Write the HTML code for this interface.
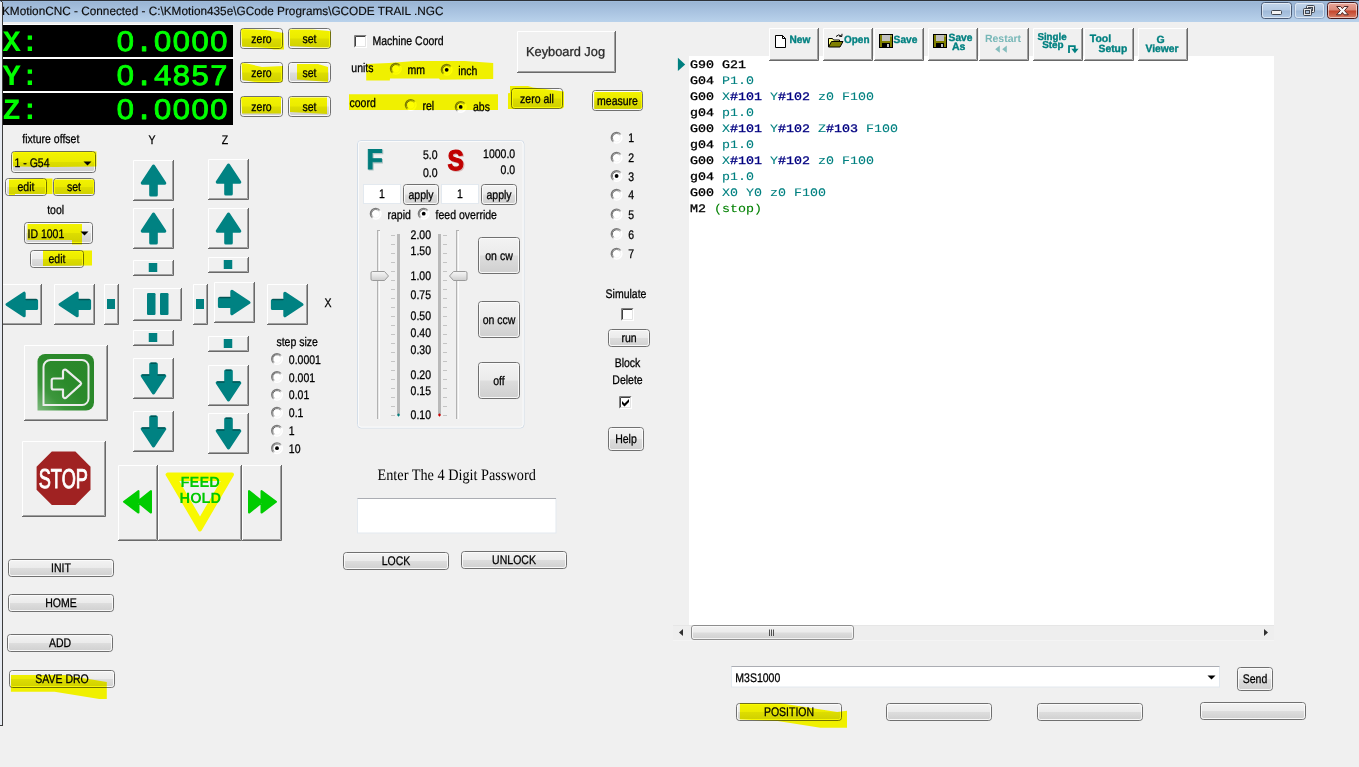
<!DOCTYPE html>
<html lang="en"><head><meta charset="utf-8"><title>KMotionCNC - Connected</title>
<style>
html,body{margin:0;padding:0;background:#f0f0f0;overflow:hidden}
body{width:1359px;height:767px;position:relative;font-family:'Liberation Sans',sans-serif}
svg{position:absolute;left:0;top:0;display:block}
text{white-space:pre}
</style></head><body>
<svg width="1359" height="767" viewBox="0 0 1359 767" text-rendering="geometricPrecision">
<defs>
<linearGradient id="gbtn" x1="0" y1="0" x2="0" y2="1">
<stop offset="0" stop-color="#f3f3f3"/><stop offset=".48" stop-color="#ebebeb"/><stop offset=".52" stop-color="#dddddd"/><stop offset="1" stop-color="#cfcfcf"/>
</linearGradient>
<linearGradient id="gtitle" x1="0" y1="0" x2="0" y2="1">
<stop offset="0" stop-color="#97b2d1"/><stop offset=".5" stop-color="#a8c2e0"/><stop offset="1" stop-color="#b9d2eb"/>
</linearGradient>
<linearGradient id="grad_radio" x1="0" y1="0" x2="1" y2="1">
<stop offset="0" stop-color="#6a6a6a"/><stop offset=".45" stop-color="#8a8a8a"/><stop offset=".6" stop-color="#ffffff"/><stop offset="1" stop-color="#ffffff"/>
</linearGradient>
<linearGradient id="grad_radio2" x1="0" y1="0" x2="1" y2="1">
<stop offset="0" stop-color="#505050"/><stop offset=".45" stop-color="#9a9a9a"/><stop offset=".6" stop-color="#f4f4f4"/><stop offset="1" stop-color="#f4f4f4"/>
</linearGradient>
<linearGradient id="gcap" x1="0" y1="0" x2="0" y2="1">
<stop offset="0" stop-color="#c3d6ec"/><stop offset=".48" stop-color="#b3c9e3"/><stop offset=".52" stop-color="#9fb9d8"/><stop offset="1" stop-color="#b4cce6"/>
</linearGradient>
<linearGradient id="gclose" x1="0" y1="0" x2="0" y2="1">
<stop offset="0" stop-color="#e9a99d"/><stop offset=".48" stop-color="#d98877"/><stop offset=".52" stop-color="#c4432a"/><stop offset="1" stop-color="#d8836c"/>
</linearGradient>
<linearGradient id="gteal" x1="0" y1="0" x2="0" y2="1">
<stop offset="0" stop-color="#009090"/><stop offset="1" stop-color="#007878"/>
</linearGradient>
<linearGradient id="ggreen" x1="0" y1="1" x2="1" y2="0">
<stop offset="0" stop-color="#7fba7f"/><stop offset=".25" stop-color="#3c963c"/><stop offset=".5" stop-color="#2b8a2b"/><stop offset="1" stop-color="#2a872a"/>
</linearGradient>
<linearGradient id="gthumb" x1="0" y1="0" x2="0" y2="1">
<stop offset="0" stop-color="#f6f6f6"/><stop offset=".5" stop-color="#e4e4e4"/><stop offset="1" stop-color="#cdcdcd"/>
</linearGradient>
</defs>
<rect x="0" y="0" width="1359" height="767" fill="#f0f0f0"/>
<g id="titlebar">
<rect x="0" y="0" width="1359" height="22" fill="url(#gtitle)"/>
<rect x="0" y="0" width="1359" height="1" fill="#2d3138"/>
<rect x="0" y="1" width="1359" height="1" fill="#9fbbdb"/>
<text transform="translate(2,14.9) scale(0.982,1)" text-anchor="start" font-family="'Liberation Sans', sans-serif" font-size="12" font-weight="normal" fill="#0c0c0c" stroke="#0c0c0c" stroke-width=".15">KMotionCNC - Connected - C:\KMotion435e\GCode Programs\GCODE TRAIL .NGC</text>
<rect x="1261.5" y="2.5" width="30" height="16" rx="3" ry="3" fill="url(#gcap)" stroke="#4a5a74"/>
<rect x="1262.5" y="3.5" width="28" height="14" rx="2" ry="2" fill="none" stroke="#ffffff" stroke-opacity=".55"/>
<rect x="1294.5" y="2.5" width="30" height="16" rx="3" ry="3" fill="url(#gcap)" stroke="#8ea4c2"/>
<rect x="1295.5" y="3.5" width="28" height="14" rx="2" ry="2" fill="none" stroke="#ffffff" stroke-opacity=".55"/>
<rect x="1327.5" y="2.5" width="30" height="16" rx="3" ry="3" fill="url(#gclose)" stroke="#47181a"/>
<rect x="1328.5" y="3.5" width="28" height="14" rx="2" ry="2" fill="none" stroke="#ffffff" stroke-opacity=".55"/>
<rect x="1271.5" y="10.5" width="10" height="4" rx="1" fill="#f4f4f4" stroke="#404650"/>
<rect x="1306.5" y="5.5" width="8" height="7" rx="1" fill="#e8e8e8" stroke="#404650"/>
<rect x="1308.5" y="7.5" width="4" height="3" fill="#a9c0dc" stroke="#404650"/>
<rect x="1303.5" y="8.5" width="8" height="7" rx="1" fill="#e8e8e8" stroke="#404650"/>
<rect x="1305.5" y="10.5" width="4" height="3" fill="#a9c0dc" stroke="#404650"/>
<path d="M1336.7 6.5h4l1.7 2.2 1.7-2.2h4l-3.6 4.1 3.8 4.2h-4.2l-1.7-2.3-1.7 2.3h-4.2l3.8-4.2z" fill="#f8f8f8" stroke="#4e2522" stroke-width="1"/>
</g>
<g id="dro">
<rect x="3" y="24" width="231" height="1" fill="#ffffff"/>
<rect x="3" y="57" width="231" height="2" fill="#ffffff"/>
<rect x="3" y="91" width="231" height="2" fill="#ffffff"/>
<rect x="3" y="25" width="230" height="32" fill="#000"/>
<rect x="3" y="59" width="230" height="32" fill="#000"/>
<rect x="3" y="93" width="230" height="32" fill="#000"/>
<text transform="translate(2.5,50.6) scale(1.03,1)" text-anchor="start" font-family="'Liberation Mono', monospace" font-size="29.5" font-weight="bold" fill="#00ff00" >X:</text>
<text transform="translate(228.1,51.0) scale(1.045,1)" text-anchor="end" font-family="'Liberation Mono', monospace" font-size="29.8" font-weight="normal" fill="#00ff00" stroke="#00ff00" stroke-width=".85" stroke-linejoin="round">0.0000</text>
<ellipse cx="218.76" cy="41.20" rx="2.8" ry="4.2" fill="#000"/>
<ellipse cx="200.07" cy="41.20" rx="2.8" ry="4.2" fill="#000"/>
<ellipse cx="181.39" cy="41.20" rx="2.8" ry="4.2" fill="#000"/>
<ellipse cx="162.70" cy="41.20" rx="2.8" ry="4.2" fill="#000"/>
<ellipse cx="125.33" cy="41.20" rx="2.8" ry="4.2" fill="#000"/>
<text transform="translate(2.5,84.6) scale(1.03,1)" text-anchor="start" font-family="'Liberation Mono', monospace" font-size="29.5" font-weight="bold" fill="#00ff00" >Y:</text>
<text transform="translate(228.1,85.0) scale(1.045,1)" text-anchor="end" font-family="'Liberation Mono', monospace" font-size="29.8" font-weight="normal" fill="#00ff00" stroke="#00ff00" stroke-width=".85" stroke-linejoin="round">0.4857</text>
<ellipse cx="125.33" cy="75.20" rx="2.8" ry="4.2" fill="#000"/>
<text transform="translate(2.5,118.6) scale(1.03,1)" text-anchor="start" font-family="'Liberation Mono', monospace" font-size="29.5" font-weight="bold" fill="#00ff00" >Z:</text>
<text transform="translate(228.1,119.0) scale(1.045,1)" text-anchor="end" font-family="'Liberation Mono', monospace" font-size="29.8" font-weight="normal" fill="#00ff00" stroke="#00ff00" stroke-width=".85" stroke-linejoin="round">0.0000</text>
<ellipse cx="218.76" cy="109.20" rx="2.8" ry="4.2" fill="#000"/>
<ellipse cx="200.07" cy="109.20" rx="2.8" ry="4.2" fill="#000"/>
<ellipse cx="181.39" cy="109.20" rx="2.8" ry="4.2" fill="#000"/>
<ellipse cx="162.70" cy="109.20" rx="2.8" ry="4.2" fill="#000"/>
<ellipse cx="125.33" cy="109.20" rx="2.8" ry="4.2" fill="#000"/>
</g>
<g id="zeroset">
<rect x="240.5" y="28.5" width="42" height="20" rx="3" ry="3" fill="url(#gbtn)" stroke="#707070"/>
<rect x="241.5" y="29.5" width="40" height="18" rx="2" ry="2" fill="none" stroke="#fcfcfc" stroke-opacity=".9"/>
<text transform="translate(261.5,42.7) scale(0.84,1)" text-anchor="middle" font-family="'Liberation Sans', sans-serif" font-size="12.5" font-weight="normal" fill="#000"  stroke="#000" stroke-width=".28">zero</text>
<rect x="288.5" y="28.5" width="42" height="20" rx="3" ry="3" fill="url(#gbtn)" stroke="#707070"/>
<rect x="289.5" y="29.5" width="40" height="18" rx="2" ry="2" fill="none" stroke="#fcfcfc" stroke-opacity=".9"/>
<text transform="translate(309.5,42.7) scale(0.84,1)" text-anchor="middle" font-family="'Liberation Sans', sans-serif" font-size="12.5" font-weight="normal" fill="#000"  stroke="#000" stroke-width=".28">set</text>
<rect x="240.5" y="62.5" width="42" height="20" rx="3" ry="3" fill="url(#gbtn)" stroke="#707070"/>
<rect x="241.5" y="63.5" width="40" height="18" rx="2" ry="2" fill="none" stroke="#fcfcfc" stroke-opacity=".9"/>
<text transform="translate(261.5,76.7) scale(0.84,1)" text-anchor="middle" font-family="'Liberation Sans', sans-serif" font-size="12.5" font-weight="normal" fill="#000"  stroke="#000" stroke-width=".28">zero</text>
<rect x="288.5" y="62.5" width="42" height="20" rx="3" ry="3" fill="url(#gbtn)" stroke="#707070"/>
<rect x="289.5" y="63.5" width="40" height="18" rx="2" ry="2" fill="none" stroke="#fcfcfc" stroke-opacity=".9"/>
<text transform="translate(309.5,76.7) scale(0.84,1)" text-anchor="middle" font-family="'Liberation Sans', sans-serif" font-size="12.5" font-weight="normal" fill="#000"  stroke="#000" stroke-width=".28">set</text>
<rect x="240.5" y="96.5" width="42" height="20" rx="3" ry="3" fill="url(#gbtn)" stroke="#707070"/>
<rect x="241.5" y="97.5" width="40" height="18" rx="2" ry="2" fill="none" stroke="#fcfcfc" stroke-opacity=".9"/>
<text transform="translate(261.5,110.7) scale(0.84,1)" text-anchor="middle" font-family="'Liberation Sans', sans-serif" font-size="12.5" font-weight="normal" fill="#000"  stroke="#000" stroke-width=".28">zero</text>
<rect x="288.5" y="96.5" width="42" height="20" rx="3" ry="3" fill="url(#gbtn)" stroke="#707070"/>
<rect x="289.5" y="97.5" width="40" height="18" rx="2" ry="2" fill="none" stroke="#fcfcfc" stroke-opacity=".9"/>
<text transform="translate(309.5,110.7) scale(0.84,1)" text-anchor="middle" font-family="'Liberation Sans', sans-serif" font-size="12.5" font-weight="normal" fill="#000"  stroke="#000" stroke-width=".28">set</text>
</g>
<g id="coordopts">
<rect x="354" y="35" width="13" height="13" fill="#fff"/>
<path d="M354.5 47.5V35.5H366.5" fill="none" stroke="#808080"/>
<path d="M355.5 46.5V36.5H365.5" fill="none" stroke="#404040"/>
<path d="M354.5 47.5H366.5V35.5" fill="none" stroke="#ffffff"/>
<path d="M355.5 46.5H365.5V36.5" fill="none" stroke="#e3e3e3"/>
<text transform="translate(372.5,44.8) scale(0.84,1)" text-anchor="start" font-family="'Liberation Sans', sans-serif" font-size="12.5" font-weight="normal" fill="#000"  stroke="#000" stroke-width=".28">Machine Coord</text>
<text transform="translate(351.3,71.8) scale(0.84,1)" text-anchor="start" font-family="'Liberation Sans', sans-serif" font-size="12.5" font-weight="normal" fill="#000"  stroke="#000" stroke-width=".28">units</text>
<circle cx="395.8" cy="68.8" r="5.5" fill="#fff"/>
<circle cx="395.8" cy="68.8" r="5.3" fill="none" stroke="url(#grad_radio)" stroke-width="1.4"/>
<circle cx="395.8" cy="68.8" r="4.2" fill="none" stroke="url(#grad_radio2)" stroke-width="1"/>
<text transform="translate(407.6,73.7) scale(0.84,1)" text-anchor="start" font-family="'Liberation Sans', sans-serif" font-size="12.5" font-weight="normal" fill="#000"  stroke="#000" stroke-width=".28">mm</text>
<circle cx="446.7" cy="69.8" r="5.5" fill="#fff"/>
<circle cx="446.7" cy="69.8" r="5.3" fill="none" stroke="url(#grad_radio)" stroke-width="1.4"/>
<circle cx="446.7" cy="69.8" r="4.2" fill="none" stroke="url(#grad_radio2)" stroke-width="1"/>
<circle cx="446.7" cy="69.8" r="1.9" fill="#000"/>
<text transform="translate(458.2,74.8) scale(0.84,1)" text-anchor="start" font-family="'Liberation Sans', sans-serif" font-size="12.5" font-weight="normal" fill="#000"  stroke="#000" stroke-width=".28">inch</text>
<text transform="translate(349.5,106.7) scale(0.84,1)" text-anchor="start" font-family="'Liberation Sans', sans-serif" font-size="12.5" font-weight="normal" fill="#000"  stroke="#000" stroke-width=".28">coord</text>
<circle cx="410.7" cy="104.9" r="5.5" fill="#fff"/>
<circle cx="410.7" cy="104.9" r="5.3" fill="none" stroke="url(#grad_radio)" stroke-width="1.4"/>
<circle cx="410.7" cy="104.9" r="4.2" fill="none" stroke="url(#grad_radio2)" stroke-width="1"/>
<text transform="translate(422.5,109.5) scale(0.84,1)" text-anchor="start" font-family="'Liberation Sans', sans-serif" font-size="12.5" font-weight="normal" fill="#000"  stroke="#000" stroke-width=".28">rel</text>
<circle cx="460.7" cy="106.9" r="5.5" fill="#fff"/>
<circle cx="460.7" cy="106.9" r="5.3" fill="none" stroke="url(#grad_radio)" stroke-width="1.4"/>
<circle cx="460.7" cy="106.9" r="4.2" fill="none" stroke="url(#grad_radio2)" stroke-width="1"/>
<circle cx="460.7" cy="106.9" r="1.9" fill="#000"/>
<text transform="translate(473,111.4) scale(0.84,1)" text-anchor="start" font-family="'Liberation Sans', sans-serif" font-size="12.5" font-weight="normal" fill="#000"  stroke="#000" stroke-width=".28">abs</text>
</g>
<rect x="517" y="31" width="99" height="42" fill="#f0f0f0"/>
<path d="M517 72.5H615.5V31" fill="none" stroke="#696969"/>
<path d="M518 71.5H614.5V32" fill="none" stroke="#a0a0a0"/>
<path d="M517.5 72V31.5H615" fill="none" stroke="#ffffff"/>
<text transform="translate(565.5,56.2) scale(0.985,1)" text-anchor="middle" font-family="'Liberation Sans', sans-serif" font-size="13" font-weight="normal" fill="#2a2a2a" stroke="#2a2a2a" stroke-width=".3">Keyboard Jog</text>
<rect x="511.5" y="88.5" width="51" height="20" rx="3" ry="3" fill="url(#gbtn)" stroke="#707070"/>
<rect x="512.5" y="89.5" width="49" height="18" rx="2" ry="2" fill="none" stroke="#fcfcfc" stroke-opacity=".9"/>
<text transform="translate(537.0,102.7) scale(0.84,1)" text-anchor="middle" font-family="'Liberation Sans', sans-serif" font-size="12.5" font-weight="normal" fill="#000"  stroke="#000" stroke-width=".28">zero all</text>
<rect x="592.5" y="90.5" width="50" height="20" rx="3" ry="3" fill="url(#gbtn)" stroke="#707070"/>
<rect x="593.5" y="91.5" width="48" height="18" rx="2" ry="2" fill="none" stroke="#fcfcfc" stroke-opacity=".9"/>
<text transform="translate(617.5,104.7) scale(0.84,1)" text-anchor="middle" font-family="'Liberation Sans', sans-serif" font-size="12.5" font-weight="normal" fill="#000"  stroke="#000" stroke-width=".28">measure</text>
<g id="rcol">
<circle cx="616.6" cy="137.7" r="5.5" fill="#fff"/>
<circle cx="616.6" cy="137.7" r="5.3" fill="none" stroke="url(#grad_radio)" stroke-width="1.4"/>
<circle cx="616.6" cy="137.7" r="4.2" fill="none" stroke="url(#grad_radio2)" stroke-width="1"/>
<text transform="translate(628.3,142.29999999999998) scale(0.84,1)" text-anchor="start" font-family="'Liberation Sans', sans-serif" font-size="12.5" font-weight="normal" fill="#000"  stroke="#000" stroke-width=".28">1</text>
<circle cx="616.6" cy="157.7" r="5.5" fill="#fff"/>
<circle cx="616.6" cy="157.7" r="5.3" fill="none" stroke="url(#grad_radio)" stroke-width="1.4"/>
<circle cx="616.6" cy="157.7" r="4.2" fill="none" stroke="url(#grad_radio2)" stroke-width="1"/>
<text transform="translate(628.3,162.29999999999998) scale(0.84,1)" text-anchor="start" font-family="'Liberation Sans', sans-serif" font-size="12.5" font-weight="normal" fill="#000"  stroke="#000" stroke-width=".28">2</text>
<circle cx="616.6" cy="176" r="5.5" fill="#fff"/>
<circle cx="616.6" cy="176" r="5.3" fill="none" stroke="url(#grad_radio)" stroke-width="1.4"/>
<circle cx="616.6" cy="176" r="4.2" fill="none" stroke="url(#grad_radio2)" stroke-width="1"/>
<circle cx="616.6" cy="176" r="1.9" fill="#000"/>
<text transform="translate(628.3,180.6) scale(0.84,1)" text-anchor="start" font-family="'Liberation Sans', sans-serif" font-size="12.5" font-weight="normal" fill="#000"  stroke="#000" stroke-width=".28">3</text>
<circle cx="616.6" cy="194.8" r="5.5" fill="#fff"/>
<circle cx="616.6" cy="194.8" r="5.3" fill="none" stroke="url(#grad_radio)" stroke-width="1.4"/>
<circle cx="616.6" cy="194.8" r="4.2" fill="none" stroke="url(#grad_radio2)" stroke-width="1"/>
<text transform="translate(628.3,199.4) scale(0.84,1)" text-anchor="start" font-family="'Liberation Sans', sans-serif" font-size="12.5" font-weight="normal" fill="#000"  stroke="#000" stroke-width=".28">4</text>
<circle cx="616.6" cy="214.4" r="5.5" fill="#fff"/>
<circle cx="616.6" cy="214.4" r="5.3" fill="none" stroke="url(#grad_radio)" stroke-width="1.4"/>
<circle cx="616.6" cy="214.4" r="4.2" fill="none" stroke="url(#grad_radio2)" stroke-width="1"/>
<text transform="translate(628.3,219.0) scale(0.84,1)" text-anchor="start" font-family="'Liberation Sans', sans-serif" font-size="12.5" font-weight="normal" fill="#000"  stroke="#000" stroke-width=".28">5</text>
<circle cx="616.6" cy="234" r="5.5" fill="#fff"/>
<circle cx="616.6" cy="234" r="5.3" fill="none" stroke="url(#grad_radio)" stroke-width="1.4"/>
<circle cx="616.6" cy="234" r="4.2" fill="none" stroke="url(#grad_radio2)" stroke-width="1"/>
<text transform="translate(628.3,238.6) scale(0.84,1)" text-anchor="start" font-family="'Liberation Sans', sans-serif" font-size="12.5" font-weight="normal" fill="#000"  stroke="#000" stroke-width=".28">6</text>
<circle cx="616.6" cy="253.7" r="5.5" fill="#fff"/>
<circle cx="616.6" cy="253.7" r="5.3" fill="none" stroke="url(#grad_radio)" stroke-width="1.4"/>
<circle cx="616.6" cy="253.7" r="4.2" fill="none" stroke="url(#grad_radio2)" stroke-width="1"/>
<text transform="translate(628.3,258.3) scale(0.84,1)" text-anchor="start" font-family="'Liberation Sans', sans-serif" font-size="12.5" font-weight="normal" fill="#000"  stroke="#000" stroke-width=".28">7</text>
<text transform="translate(626,298) scale(0.84,1)" text-anchor="middle" font-family="'Liberation Sans', sans-serif" font-size="12.5" font-weight="normal" fill="#000"  stroke="#000" stroke-width=".28">Simulate</text>
<rect x="621" y="308" width="13" height="13" fill="#fff"/>
<path d="M621.5 320.5V308.5H633.5" fill="none" stroke="#808080"/>
<path d="M622.5 319.5V309.5H632.5" fill="none" stroke="#404040"/>
<path d="M621.5 320.5H633.5V308.5" fill="none" stroke="#ffffff"/>
<path d="M622.5 319.5H632.5V309.5" fill="none" stroke="#e3e3e3"/>
<rect x="608.5" y="329.5" width="41" height="17" rx="3" ry="3" fill="url(#gbtn)" stroke="#707070"/>
<rect x="609.5" y="330.5" width="39" height="15" rx="2" ry="2" fill="none" stroke="#fcfcfc" stroke-opacity=".9"/>
<text transform="translate(629.0,342.2) scale(0.84,1)" text-anchor="middle" font-family="'Liberation Sans', sans-serif" font-size="12.5" font-weight="normal" fill="#000"  stroke="#000" stroke-width=".28">run</text>
<text transform="translate(627.5,366.8) scale(0.84,1)" text-anchor="middle" font-family="'Liberation Sans', sans-serif" font-size="12.5" font-weight="normal" fill="#000"  stroke="#000" stroke-width=".28">Block</text>
<text transform="translate(627.5,384.2) scale(0.84,1)" text-anchor="middle" font-family="'Liberation Sans', sans-serif" font-size="12.5" font-weight="normal" fill="#000"  stroke="#000" stroke-width=".28">Delete</text>
<rect x="619" y="396" width="13" height="13" fill="#fff"/>
<path d="M619.5 408.5V396.5H631.5" fill="none" stroke="#808080"/>
<path d="M620.5 407.5V397.5H630.5" fill="none" stroke="#404040"/>
<path d="M619.5 408.5H631.5V396.5" fill="none" stroke="#ffffff"/>
<path d="M620.5 407.5H630.5V397.5" fill="none" stroke="#e3e3e3"/>
<path d="M622 401L624.5 403.5L629 399V402L624.5 406.5L622 404Z" fill="#000"/>
<rect x="608.5" y="427.5" width="35" height="23" rx="3" ry="3" fill="url(#gbtn)" stroke="#707070"/>
<rect x="609.5" y="428.5" width="33" height="21" rx="2" ry="2" fill="none" stroke="#fcfcfc" stroke-opacity=".9"/>
<text transform="translate(626.0,443.2) scale(0.84,1)" text-anchor="middle" font-family="'Liberation Sans', sans-serif" font-size="12.5" font-weight="normal" fill="#000"  stroke="#000" stroke-width=".28">Help</text>
</g>
<g id="fixture">
<text transform="translate(50.8,143) scale(0.84,1)" text-anchor="middle" font-family="'Liberation Sans', sans-serif" font-size="12.5" font-weight="normal" fill="#000"  stroke="#000" stroke-width=".28">fixture offset</text>
<rect x="11.5" y="151.5" width="84" height="21" rx="3" ry="3" fill="url(#gbtn)" stroke="#707070"/>
<rect x="12.5" y="152.5" width="82" height="19" rx="2" ry="2" fill="none" stroke="#fcfcfc" stroke-opacity=".9"/>
<text transform="translate(14.5,166.8) scale(0.84,1)" text-anchor="start" font-family="'Liberation Sans', sans-serif" font-size="12.5" font-weight="normal" fill="#000"  stroke="#000" stroke-width=".28">1 - G54</text>
<path d="M83.5 161.5h8l-4 4z" fill="#000"/>
<rect x="5.5" y="178.5" width="41" height="17" rx="3" ry="3" fill="url(#gbtn)" stroke="#707070"/>
<rect x="6.5" y="179.5" width="39" height="15" rx="2" ry="2" fill="none" stroke="#fcfcfc" stroke-opacity=".9"/>
<text transform="translate(26.0,191.2) scale(0.84,1)" text-anchor="middle" font-family="'Liberation Sans', sans-serif" font-size="12.5" font-weight="normal" fill="#000"  stroke="#000" stroke-width=".28">edit</text>
<rect x="53.5" y="178.5" width="41" height="17" rx="3" ry="3" fill="url(#gbtn)" stroke="#707070"/>
<rect x="54.5" y="179.5" width="39" height="15" rx="2" ry="2" fill="none" stroke="#fcfcfc" stroke-opacity=".9"/>
<text transform="translate(74.0,191.2) scale(0.84,1)" text-anchor="middle" font-family="'Liberation Sans', sans-serif" font-size="12.5" font-weight="normal" fill="#000"  stroke="#000" stroke-width=".28">set</text>
<text transform="translate(55.6,214.3) scale(0.84,1)" text-anchor="middle" font-family="'Liberation Sans', sans-serif" font-size="12.5" font-weight="normal" fill="#000"  stroke="#000" stroke-width=".28">tool</text>
<rect x="24.5" y="222.5" width="68" height="21" rx="3" ry="3" fill="url(#gbtn)" stroke="#707070"/>
<rect x="25.5" y="223.5" width="66" height="19" rx="2" ry="2" fill="none" stroke="#fcfcfc" stroke-opacity=".9"/>
<text transform="translate(27.5,237.6) scale(0.84,1)" text-anchor="start" font-family="'Liberation Sans', sans-serif" font-size="12.5" font-weight="normal" fill="#000"  stroke="#000" stroke-width=".28">ID 1001</text>
<path d="M80.5 231.5h8l-4 4z" fill="#000"/>
<rect x="30.5" y="250.5" width="53" height="17" rx="3" ry="3" fill="url(#gbtn)" stroke="#707070"/>
<rect x="31.5" y="251.5" width="51" height="15" rx="2" ry="2" fill="none" stroke="#fcfcfc" stroke-opacity=".9"/>
<text transform="translate(57.0,263.2) scale(0.84,1)" text-anchor="middle" font-family="'Liberation Sans', sans-serif" font-size="12.5" font-weight="normal" fill="#000"  stroke="#000" stroke-width=".28">edit</text>
</g>
<g id="jog">
<text transform="translate(152,144.3) scale(0.84,1)" text-anchor="middle" font-family="'Liberation Sans', sans-serif" font-size="12.5" font-weight="normal" fill="#000"  stroke="#000" stroke-width=".28">Y</text>
<text transform="translate(225,144.3) scale(0.84,1)" text-anchor="middle" font-family="'Liberation Sans', sans-serif" font-size="12.5" font-weight="normal" fill="#000"  stroke="#000" stroke-width=".28">Z</text>
<text transform="translate(328,306.8) scale(0.84,1)" text-anchor="middle" font-family="'Liberation Sans', sans-serif" font-size="12.5" font-weight="normal" fill="#000"  stroke="#000" stroke-width=".28">X</text>
<rect x="133" y="160" width="41" height="41" fill="#f0f0f0"/>
<path d="M133 200.5H173.5V160" fill="none" stroke="#696969"/>
<path d="M134 199.5H172.5V161" fill="none" stroke="#a0a0a0"/>
<path d="M133.5 200V160.5H173" fill="none" stroke="#ffffff"/>
<g transform="translate(153.5,180.5) rotate(0)">
<path d="M0 -14.4L11.2 2.6H2.7V14.5H-2.7V2.6H-11.2Z" fill="#008282" stroke="#008282" stroke-width="3.2" stroke-linejoin="round"/>
</g>
<rect x="208" y="159" width="41" height="41" fill="#f0f0f0"/>
<path d="M208 199.5H248.5V159" fill="none" stroke="#696969"/>
<path d="M209 198.5H247.5V160" fill="none" stroke="#a0a0a0"/>
<path d="M208.5 199V159.5H248" fill="none" stroke="#ffffff"/>
<g transform="translate(228.5,179.5) rotate(0)">
<path d="M0 -14.4L11.2 2.6H2.7V14.5H-2.7V2.6H-11.2Z" fill="#008282" stroke="#008282" stroke-width="3.2" stroke-linejoin="round"/>
</g>
<rect x="133" y="208" width="41" height="41" fill="#f0f0f0"/>
<path d="M133 248.5H173.5V208" fill="none" stroke="#696969"/>
<path d="M134 247.5H172.5V209" fill="none" stroke="#a0a0a0"/>
<path d="M133.5 248V208.5H173" fill="none" stroke="#ffffff"/>
<g transform="translate(153.5,228.5) rotate(0)">
<path d="M0 -14.4L11.2 2.6H2.7V14.5H-2.7V2.6H-11.2Z" fill="#008282" stroke="#008282" stroke-width="3.2" stroke-linejoin="round"/>
</g>
<rect x="208" y="208" width="41" height="41" fill="#f0f0f0"/>
<path d="M208 248.5H248.5V208" fill="none" stroke="#696969"/>
<path d="M209 247.5H247.5V209" fill="none" stroke="#a0a0a0"/>
<path d="M208.5 248V208.5H248" fill="none" stroke="#ffffff"/>
<g transform="translate(228.5,228.5) rotate(0)">
<path d="M0 -14.4L11.2 2.6H2.7V14.5H-2.7V2.6H-11.2Z" fill="#008282" stroke="#008282" stroke-width="3.2" stroke-linejoin="round"/>
</g>
<rect x="133" y="260" width="41" height="16" fill="#f0f0f0"/>
<path d="M133 275.5H173.5V260" fill="none" stroke="#696969"/>
<path d="M134 274.5H172.5V261" fill="none" stroke="#a0a0a0"/>
<path d="M133.5 275V260.5H173" fill="none" stroke="#ffffff"/>
<rect x="148.75" y="263.00" width="8.5" height="9" fill="#008080"/>
<rect x="208" y="257" width="41" height="16" fill="#f0f0f0"/>
<path d="M208 272.5H248.5V257" fill="none" stroke="#696969"/>
<path d="M209 271.5H247.5V258" fill="none" stroke="#a0a0a0"/>
<path d="M208.5 272V257.5H248" fill="none" stroke="#ffffff"/>
<rect x="223.75" y="260.00" width="8.5" height="9" fill="#008080"/>
<rect x="1" y="284" width="41" height="41" fill="#f0f0f0"/>
<path d="M1 324.5H41.5V284" fill="none" stroke="#696969"/>
<path d="M2 323.5H40.5V285" fill="none" stroke="#a0a0a0"/>
<path d="M1.5 324V284.5H41" fill="none" stroke="#ffffff"/>
<g transform="translate(21.5,304.5) rotate(-90)">
<path d="M0 -14.4L11.2 2.6H4.0V15.0H-4.0V2.6H-11.2Z" fill="#008282" stroke="#008282" stroke-width="3.2" stroke-linejoin="round"/>
<path d="M4.9 4.6V14.7" fill="none" stroke="#004e4e" stroke-width="1.5" stroke-linecap="round" opacity=".85"/>
</g>
<rect x="54" y="284" width="41" height="41" fill="#f0f0f0"/>
<path d="M54 324.5H94.5V284" fill="none" stroke="#696969"/>
<path d="M55 323.5H93.5V285" fill="none" stroke="#a0a0a0"/>
<path d="M54.5 324V284.5H94" fill="none" stroke="#ffffff"/>
<g transform="translate(74.5,304.5) rotate(-90)">
<path d="M0 -14.4L11.2 2.6H4.0V15.0H-4.0V2.6H-11.2Z" fill="#008282" stroke="#008282" stroke-width="3.2" stroke-linejoin="round"/>
<path d="M4.9 4.6V14.7" fill="none" stroke="#004e4e" stroke-width="1.5" stroke-linecap="round" opacity=".85"/>
</g>
<rect x="104" y="284" width="15" height="41" fill="#f0f0f0"/>
<path d="M104 324.5H118.5V284" fill="none" stroke="#696969"/>
<path d="M105 323.5H117.5V285" fill="none" stroke="#a0a0a0"/>
<path d="M104.5 324V284.5H118" fill="none" stroke="#ffffff"/>
<rect x="107.00" y="299.00" width="8" height="10" fill="#008080"/>
<rect x="133" y="288" width="49" height="33" fill="#f0f0f0"/>
<path d="M133 320.5H181.5V288" fill="none" stroke="#696969"/>
<path d="M134 319.5H180.5V289" fill="none" stroke="#a0a0a0"/>
<path d="M133.5 320V288.5H181" fill="none" stroke="#ffffff"/>
<rect x="147" y="293" width="8.5" height="22" rx="1.2" fill="#008080"/><rect x="160" y="293" width="8.5" height="22" rx="1.2" fill="#008080"/>
<rect x="193" y="284" width="15" height="41" fill="#f0f0f0"/>
<path d="M193 324.5H207.5V284" fill="none" stroke="#696969"/>
<path d="M194 323.5H206.5V285" fill="none" stroke="#a0a0a0"/>
<path d="M193.5 324V284.5H207" fill="none" stroke="#ffffff"/>
<rect x="196.00" y="299.00" width="8" height="10" fill="#008080"/>
<rect x="214" y="282" width="41" height="41" fill="#f0f0f0"/>
<path d="M214 322.5H254.5V282" fill="none" stroke="#696969"/>
<path d="M215 321.5H253.5V283" fill="none" stroke="#a0a0a0"/>
<path d="M214.5 322V282.5H254" fill="none" stroke="#ffffff"/>
<g transform="translate(234.5,302.5) rotate(90)">
<path d="M0 -14.4L11.2 2.6H4.0V15.0H-4.0V2.6H-11.2Z" fill="#008282" stroke="#008282" stroke-width="3.2" stroke-linejoin="round"/>
<path d="M-4.9 4.6V14.7" fill="none" stroke="#004e4e" stroke-width="1.5" stroke-linecap="round" opacity=".85"/>
</g>
<rect x="267" y="284" width="41" height="41" fill="#f0f0f0"/>
<path d="M267 324.5H307.5V284" fill="none" stroke="#696969"/>
<path d="M268 323.5H306.5V285" fill="none" stroke="#a0a0a0"/>
<path d="M267.5 324V284.5H307" fill="none" stroke="#ffffff"/>
<g transform="translate(287.5,304.5) rotate(90)">
<path d="M0 -14.4L11.2 2.6H4.0V15.0H-4.0V2.6H-11.2Z" fill="#008282" stroke="#008282" stroke-width="3.2" stroke-linejoin="round"/>
<path d="M-4.9 4.6V14.7" fill="none" stroke="#004e4e" stroke-width="1.5" stroke-linecap="round" opacity=".85"/>
</g>
<rect x="133" y="330" width="41" height="16" fill="#f0f0f0"/>
<path d="M133 345.5H173.5V330" fill="none" stroke="#696969"/>
<path d="M134 344.5H172.5V331" fill="none" stroke="#a0a0a0"/>
<path d="M133.5 345V330.5H173" fill="none" stroke="#ffffff"/>
<rect x="148.75" y="333.00" width="8.5" height="9" fill="#008080"/>
<rect x="208" y="336" width="41" height="16" fill="#f0f0f0"/>
<path d="M208 351.5H248.5V336" fill="none" stroke="#696969"/>
<path d="M209 350.5H247.5V337" fill="none" stroke="#a0a0a0"/>
<path d="M208.5 351V336.5H248" fill="none" stroke="#ffffff"/>
<rect x="223.75" y="339.00" width="8.5" height="9" fill="#008080"/>
<rect x="133" y="358" width="41" height="41" fill="#f0f0f0"/>
<path d="M133 398.5H173.5V358" fill="none" stroke="#696969"/>
<path d="M134 397.5H172.5V359" fill="none" stroke="#a0a0a0"/>
<path d="M133.5 398V358.5H173" fill="none" stroke="#ffffff"/>
<g transform="translate(153.5,378.5) rotate(180)">
<path d="M0 -14.4L11.2 2.6H2.7V14.5H-2.7V2.6H-11.2Z" fill="#008282" stroke="#008282" stroke-width="3.2" stroke-linejoin="round"/>
<path d="M-11 3.5H-4.5M4.5 3.5H11M-2.4000000000000004 15.3H2.4000000000000004" fill="none" stroke="#004e4e" stroke-width="1.5" stroke-linecap="round" opacity=".85"/>
</g>
<rect x="208" y="365" width="41" height="41" fill="#f0f0f0"/>
<path d="M208 405.5H248.5V365" fill="none" stroke="#696969"/>
<path d="M209 404.5H247.5V366" fill="none" stroke="#a0a0a0"/>
<path d="M208.5 405V365.5H248" fill="none" stroke="#ffffff"/>
<g transform="translate(228.5,385.5) rotate(180)">
<path d="M0 -14.4L11.2 2.6H2.7V14.5H-2.7V2.6H-11.2Z" fill="#008282" stroke="#008282" stroke-width="3.2" stroke-linejoin="round"/>
<path d="M-11 3.5H-4.5M4.5 3.5H11M-2.4000000000000004 15.3H2.4000000000000004" fill="none" stroke="#004e4e" stroke-width="1.5" stroke-linecap="round" opacity=".85"/>
</g>
<rect x="133" y="411" width="41" height="41" fill="#f0f0f0"/>
<path d="M133 451.5H173.5V411" fill="none" stroke="#696969"/>
<path d="M134 450.5H172.5V412" fill="none" stroke="#a0a0a0"/>
<path d="M133.5 451V411.5H173" fill="none" stroke="#ffffff"/>
<g transform="translate(153.5,431.5) rotate(180)">
<path d="M0 -14.4L11.2 2.6H2.7V14.5H-2.7V2.6H-11.2Z" fill="#008282" stroke="#008282" stroke-width="3.2" stroke-linejoin="round"/>
<path d="M-11 3.5H-4.5M4.5 3.5H11M-2.4000000000000004 15.3H2.4000000000000004" fill="none" stroke="#004e4e" stroke-width="1.5" stroke-linecap="round" opacity=".85"/>
</g>
<rect x="208" y="413" width="41" height="41" fill="#f0f0f0"/>
<path d="M208 453.5H248.5V413" fill="none" stroke="#696969"/>
<path d="M209 452.5H247.5V414" fill="none" stroke="#a0a0a0"/>
<path d="M208.5 453V413.5H248" fill="none" stroke="#ffffff"/>
<g transform="translate(228.5,433.5) rotate(180)">
<path d="M0 -14.4L11.2 2.6H2.7V14.5H-2.7V2.6H-11.2Z" fill="#008282" stroke="#008282" stroke-width="3.2" stroke-linejoin="round"/>
<path d="M-11 3.5H-4.5M4.5 3.5H11M-2.4000000000000004 15.3H2.4000000000000004" fill="none" stroke="#004e4e" stroke-width="1.5" stroke-linecap="round" opacity=".85"/>
</g>
</g>
<g id="stepsize">
<text transform="translate(297.1,346) scale(0.84,1)" text-anchor="middle" font-family="'Liberation Sans', sans-serif" font-size="12.5" font-weight="normal" fill="#000"  stroke="#000" stroke-width=".28">step size</text>
<circle cx="277.0" cy="359" r="5.5" fill="#fff"/>
<circle cx="277.0" cy="359" r="5.3" fill="none" stroke="url(#grad_radio)" stroke-width="1.4"/>
<circle cx="277.0" cy="359" r="4.2" fill="none" stroke="url(#grad_radio2)" stroke-width="1"/>
<text transform="translate(288.8,363.6) scale(0.84,1)" text-anchor="start" font-family="'Liberation Sans', sans-serif" font-size="12.5" font-weight="normal" fill="#000"  stroke="#000" stroke-width=".28">0.0001</text>
<circle cx="277.0" cy="377" r="5.5" fill="#fff"/>
<circle cx="277.0" cy="377" r="5.3" fill="none" stroke="url(#grad_radio)" stroke-width="1.4"/>
<circle cx="277.0" cy="377" r="4.2" fill="none" stroke="url(#grad_radio2)" stroke-width="1"/>
<text transform="translate(288.8,381.6) scale(0.84,1)" text-anchor="start" font-family="'Liberation Sans', sans-serif" font-size="12.5" font-weight="normal" fill="#000"  stroke="#000" stroke-width=".28">0.001</text>
<circle cx="277.0" cy="394.8" r="5.5" fill="#fff"/>
<circle cx="277.0" cy="394.8" r="5.3" fill="none" stroke="url(#grad_radio)" stroke-width="1.4"/>
<circle cx="277.0" cy="394.8" r="4.2" fill="none" stroke="url(#grad_radio2)" stroke-width="1"/>
<text transform="translate(288.8,399.40000000000003) scale(0.84,1)" text-anchor="start" font-family="'Liberation Sans', sans-serif" font-size="12.5" font-weight="normal" fill="#000"  stroke="#000" stroke-width=".28">0.01</text>
<circle cx="277.0" cy="412.8" r="5.5" fill="#fff"/>
<circle cx="277.0" cy="412.8" r="5.3" fill="none" stroke="url(#grad_radio)" stroke-width="1.4"/>
<circle cx="277.0" cy="412.8" r="4.2" fill="none" stroke="url(#grad_radio2)" stroke-width="1"/>
<text transform="translate(288.8,417.40000000000003) scale(0.84,1)" text-anchor="start" font-family="'Liberation Sans', sans-serif" font-size="12.5" font-weight="normal" fill="#000"  stroke="#000" stroke-width=".28">0.1</text>
<circle cx="277.0" cy="430.8" r="5.5" fill="#fff"/>
<circle cx="277.0" cy="430.8" r="5.3" fill="none" stroke="url(#grad_radio)" stroke-width="1.4"/>
<circle cx="277.0" cy="430.8" r="4.2" fill="none" stroke="url(#grad_radio2)" stroke-width="1"/>
<text transform="translate(288.8,435.40000000000003) scale(0.84,1)" text-anchor="start" font-family="'Liberation Sans', sans-serif" font-size="12.5" font-weight="normal" fill="#000"  stroke="#000" stroke-width=".28">1</text>
<circle cx="277.0" cy="448.2" r="5.5" fill="#fff"/>
<circle cx="277.0" cy="448.2" r="5.3" fill="none" stroke="url(#grad_radio)" stroke-width="1.4"/>
<circle cx="277.0" cy="448.2" r="4.2" fill="none" stroke="url(#grad_radio2)" stroke-width="1"/>
<circle cx="277.0" cy="448.2" r="1.9" fill="#000"/>
<text transform="translate(288.8,452.8) scale(0.84,1)" text-anchor="start" font-family="'Liberation Sans', sans-serif" font-size="12.5" font-weight="normal" fill="#000"  stroke="#000" stroke-width=".28">10</text>
</g>
<g id="cyclestart">
<rect x="24" y="345" width="84" height="76" fill="#f0f0f0"/>
<path d="M24 420.5H107.5V345" fill="none" stroke="#696969"/>
<path d="M25 419.5H106.5V346" fill="none" stroke="#a0a0a0"/>
<path d="M24.5 420V345.5H107" fill="none" stroke="#ffffff"/>
<path d="M45 354H86a8 8 0 0 1 8 8V402.5a8 8 0 0 1 -8 8H37.5V361.5a7.5 7.5 0 0 1 7.5 -7.5Z" fill="url(#ggreen)"/>
<path d="M50.5 360H82a6.5 6.5 0 0 1 6.5 6.5V398.5a6.5 6.5 0 0 1 -6.5 6.5H43.5V367a7 7 0 0 1 7 -7Z" fill="none" stroke="#ececec" stroke-width="2"/>
<path d="M53.5 378.5H63V371.5a2 2 0 0 1 3.4 -1.4L80.6 382.4a1.6 1.6 0 0 1 0 2.2L66.4 397.5a2 2 0 0 1 -3.4 -1.4V389.5H53.5a1.8 1.8 0 0 1 -1.8 -1.8V380.3a1.8 1.8 0 0 1 1.8 -1.8Z" fill="none" stroke="#ececec" stroke-width="2.2" stroke-linejoin="round"/>
</g>
<g id="stop">
<rect x="22" y="441" width="84" height="76" fill="#f0f0f0"/>
<path d="M22 516.5H105.5V441" fill="none" stroke="#696969"/>
<path d="M23 515.5H104.5V442" fill="none" stroke="#a0a0a0"/>
<path d="M22.5 516V441.5H105" fill="none" stroke="#ffffff"/>
<polygon points="51.8,451.6 75.4,451.6 90.5,466.8 90.5,489.8 75.4,505 51.8,505 36.6,489.8 36.6,466.8" fill="#a02222"/>
<text transform="translate(63.3,488.3) scale(0.665,1)" text-anchor="middle" font-family="'Liberation Sans', sans-serif" font-size="27.3" font-weight="normal" fill="#ffffff" stroke="#ffffff" stroke-width=".95">STOP</text>
</g>
<g id="feedhold">
<rect x="118" y="465" width="40" height="76" fill="#f0f0f0"/>
<path d="M118 540.5H157.5V465" fill="none" stroke="#696969"/>
<path d="M119 539.5H156.5V466" fill="none" stroke="#a0a0a0"/>
<path d="M118.5 540V465.5H157" fill="none" stroke="#ffffff"/>
<rect x="158" y="465" width="84" height="76" fill="#f0f0f0"/>
<path d="M158 540.5H241.5V465" fill="none" stroke="#696969"/>
<path d="M159 539.5H240.5V466" fill="none" stroke="#a0a0a0"/>
<path d="M158.5 540V465.5H241" fill="none" stroke="#ffffff"/>
<rect x="242" y="465" width="40" height="76" fill="#f0f0f0"/>
<path d="M242 540.5H281.5V465" fill="none" stroke="#696969"/>
<path d="M243 539.5H280.5V466" fill="none" stroke="#a0a0a0"/>
<path d="M242.5 540V465.5H281" fill="none" stroke="#ffffff"/>
<path d="M167.6 474.6H232L199.9 529.4Z" fill="#f8f800" stroke="#f8f800" stroke-width="4" stroke-linejoin="round"/>
<path d="M179.3 481H220.7L200 516.5Z" fill="#f0f0f0"/>
<text transform="translate(200.3,486.9) scale(1.0,1)" text-anchor="middle" font-family="'Liberation Sans', sans-serif" font-size="14.8" font-weight="bold" fill="#00c800" >FEED</text>
<text transform="translate(200.3,502.5) scale(0.99,1)" text-anchor="middle" font-family="'Liberation Sans', sans-serif" font-size="14.8" font-weight="bold" fill="#00c800" >HOLD</text>
<path d="M124 501.8L138.5 491V512.6ZM137.5 501.8L151 491V512.6Z" fill="#00cc00" stroke="#00cc00" stroke-width="2" stroke-linejoin="round"/>
<path d="M276 501.8L261.5 491V512.6ZM262.5 501.8L249 491V512.6Z" fill="#00cc00" stroke="#00cc00" stroke-width="2" stroke-linejoin="round"/>
</g>
<rect x="8.5" y="559.5" width="105" height="17" rx="3" ry="3" fill="url(#gbtn)" stroke="#707070"/>
<rect x="9.5" y="560.5" width="103" height="15" rx="2" ry="2" fill="none" stroke="#fcfcfc" stroke-opacity=".9"/>
<text transform="translate(61.0,572.2) scale(0.84,1)" text-anchor="middle" font-family="'Liberation Sans', sans-serif" font-size="12.5" font-weight="normal" fill="#000"  stroke="#000" stroke-width=".28">INIT</text>
<rect x="8.5" y="594.5" width="105" height="17" rx="3" ry="3" fill="url(#gbtn)" stroke="#707070"/>
<rect x="9.5" y="595.5" width="103" height="15" rx="2" ry="2" fill="none" stroke="#fcfcfc" stroke-opacity=".9"/>
<text transform="translate(61.0,607.2) scale(0.84,1)" text-anchor="middle" font-family="'Liberation Sans', sans-serif" font-size="12.5" font-weight="normal" fill="#000"  stroke="#000" stroke-width=".28">HOME</text>
<rect x="7.5" y="634.5" width="105" height="17" rx="3" ry="3" fill="url(#gbtn)" stroke="#707070"/>
<rect x="8.5" y="635.5" width="103" height="15" rx="2" ry="2" fill="none" stroke="#fcfcfc" stroke-opacity=".9"/>
<text transform="translate(60.0,647.2) scale(0.84,1)" text-anchor="middle" font-family="'Liberation Sans', sans-serif" font-size="12.5" font-weight="normal" fill="#000"  stroke="#000" stroke-width=".28">ADD</text>
<rect x="9.5" y="670.5" width="105" height="17" rx="3" ry="3" fill="url(#gbtn)" stroke="#707070"/>
<rect x="10.5" y="671.5" width="103" height="15" rx="2" ry="2" fill="none" stroke="#fcfcfc" stroke-opacity=".9"/>
<text transform="translate(62.0,683.2) scale(0.84,1)" text-anchor="middle" font-family="'Liberation Sans', sans-serif" font-size="12.5" font-weight="normal" fill="#000"  stroke="#000" stroke-width=".28">SAVE DRO</text>
<g id="fs">
<rect x="357.5" y="140.5" width="166" height="287" rx="3.5" fill="none" stroke="#ffffff"/>
<rect x="358.5" y="141.5" width="166" height="287" rx="3.5" fill="none" stroke="#ffffff" stroke-opacity=".0"/>
<rect x="357.5" y="140.5" width="166.5" height="287.5" rx="3.5" fill="none" stroke="#d3dde8"/>
<rect x="358.5" y="141.5" width="164.5" height="285.5" rx="2.5" fill="none" stroke="#fbfbfb"/>
<text transform="translate(367.4,170.3) scale(0.93,1)" text-anchor="start" font-family="'Liberation Sans', sans-serif" font-size="28.5" font-weight="bold" fill="#8aa" opacity=".6" stroke="#8aa" stroke-width="1.2">F</text>
<text transform="translate(366.4,169.3) scale(0.93,1)" text-anchor="start" font-family="'Liberation Sans', sans-serif" font-size="28.5" font-weight="bold" fill="#007c7c" stroke="#007c7c" stroke-width="1">F</text>
<text transform="translate(448.6,170.9) scale(0.86,1)" text-anchor="start" font-family="'Liberation Sans', sans-serif" font-size="28.5" font-weight="bold" fill="#c99" opacity=".6" stroke="#c99" stroke-width="1.4">S</text>
<text transform="translate(447.6,169.9) scale(0.86,1)" text-anchor="start" font-family="'Liberation Sans', sans-serif" font-size="28.5" font-weight="bold" fill="#c00000" stroke="#c00000" stroke-width="1.2">S</text>
<text transform="translate(437.5,158.8) scale(0.84,1)" text-anchor="end" font-family="'Liberation Sans', sans-serif" font-size="12.5" font-weight="normal" fill="#000"  stroke="#000" stroke-width=".28">5.0</text>
<text transform="translate(437.5,176.8) scale(0.84,1)" text-anchor="end" font-family="'Liberation Sans', sans-serif" font-size="12.5" font-weight="normal" fill="#000"  stroke="#000" stroke-width=".28">0.0</text>
<text transform="translate(515.2,158.2) scale(0.84,1)" text-anchor="end" font-family="'Liberation Sans', sans-serif" font-size="12.5" font-weight="normal" fill="#000"  stroke="#000" stroke-width=".28">1000.0</text>
<text transform="translate(515.2,174.2) scale(0.84,1)" text-anchor="end" font-family="'Liberation Sans', sans-serif" font-size="12.5" font-weight="normal" fill="#000"  stroke="#000" stroke-width=".28">0.0</text>
<rect x="363.5" y="184.5" width="37" height="19" fill="#fff" stroke="#e3e9ef"/>
<text transform="translate(382,198.4) scale(0.84,1)" text-anchor="middle" font-family="'Liberation Sans', sans-serif" font-size="12.5" font-weight="normal" fill="#000"  stroke="#000" stroke-width=".28">1</text>
<rect x="403.5" y="184.5" width="35" height="20" rx="3" ry="3" fill="url(#gbtn)" stroke="#707070"/>
<rect x="404.5" y="185.5" width="33" height="18" rx="2" ry="2" fill="none" stroke="#fcfcfc" stroke-opacity=".9"/>
<text transform="translate(421.0,199.2) scale(0.84,1)" text-anchor="middle" font-family="'Liberation Sans', sans-serif" font-size="12.5" font-weight="normal" fill="#000"  stroke="#000" stroke-width=".28">apply</text>
<rect x="441.5" y="184.5" width="37" height="19" fill="#fff" stroke="#e3e9ef"/>
<text transform="translate(460,198.4) scale(0.84,1)" text-anchor="middle" font-family="'Liberation Sans', sans-serif" font-size="12.5" font-weight="normal" fill="#000"  stroke="#000" stroke-width=".28">1</text>
<rect x="481.5" y="184.5" width="35" height="20" rx="3" ry="3" fill="url(#gbtn)" stroke="#707070"/>
<rect x="482.5" y="185.5" width="33" height="18" rx="2" ry="2" fill="none" stroke="#fcfcfc" stroke-opacity=".9"/>
<text transform="translate(499.0,199.2) scale(0.84,1)" text-anchor="middle" font-family="'Liberation Sans', sans-serif" font-size="12.5" font-weight="normal" fill="#000"  stroke="#000" stroke-width=".28">apply</text>
<circle cx="375.7" cy="213.7" r="5.5" fill="#fff"/>
<circle cx="375.7" cy="213.7" r="5.3" fill="none" stroke="url(#grad_radio)" stroke-width="1.4"/>
<circle cx="375.7" cy="213.7" r="4.2" fill="none" stroke="url(#grad_radio2)" stroke-width="1"/>
<text transform="translate(387.5,218.6) scale(0.84,1)" text-anchor="start" font-family="'Liberation Sans', sans-serif" font-size="12.5" font-weight="normal" fill="#000"  stroke="#000" stroke-width=".28">rapid</text>
<circle cx="423.7" cy="213.7" r="5.5" fill="#fff"/>
<circle cx="423.7" cy="213.7" r="5.3" fill="none" stroke="url(#grad_radio)" stroke-width="1.4"/>
<circle cx="423.7" cy="213.7" r="4.2" fill="none" stroke="url(#grad_radio2)" stroke-width="1"/>
<circle cx="423.7" cy="213.7" r="1.9" fill="#000"/>
<text transform="translate(435.6,218.6) scale(0.84,1)" text-anchor="start" font-family="'Liberation Sans', sans-serif" font-size="12.5" font-weight="normal" fill="#000"  stroke="#000" stroke-width=".28">feed override</text>
<rect x="377" y="230" width="1" height="189" fill="#b2b2b2"/>
<rect x="378" y="230" width="1" height="189" fill="#e9e9e9"/>
<rect x="379" y="230" width="1" height="189" fill="#fcfcfc"/>
<rect x="377" y="230" width="3" height="1" fill="#b2b2b2"/>
<rect x="456" y="230" width="1" height="189" fill="#b2b2b2"/>
<rect x="457" y="230" width="1" height="189" fill="#e9e9e9"/>
<rect x="458" y="230" width="1" height="189" fill="#fcfcfc"/>
<rect x="456" y="230" width="3" height="1" fill="#b2b2b2"/>
<rect x="391" y="235" width="4" height="1" fill="#c4c4c4"/>
<rect x="443" y="235" width="4" height="1" fill="#c4c4c4"/>
<rect x="391" y="244" width="4" height="1" fill="#c4c4c4"/>
<rect x="443" y="244" width="4" height="1" fill="#c4c4c4"/>
<rect x="391" y="253" width="4" height="1" fill="#c4c4c4"/>
<rect x="443" y="253" width="4" height="1" fill="#c4c4c4"/>
<rect x="391" y="262" width="4" height="1" fill="#c4c4c4"/>
<rect x="443" y="262" width="4" height="1" fill="#c4c4c4"/>
<rect x="391" y="271" width="4" height="1" fill="#c4c4c4"/>
<rect x="443" y="271" width="4" height="1" fill="#c4c4c4"/>
<rect x="391" y="280" width="4" height="1" fill="#c4c4c4"/>
<rect x="443" y="280" width="4" height="1" fill="#c4c4c4"/>
<rect x="391" y="289" width="4" height="1" fill="#c4c4c4"/>
<rect x="443" y="289" width="4" height="1" fill="#c4c4c4"/>
<rect x="391" y="298" width="4" height="1" fill="#c4c4c4"/>
<rect x="443" y="298" width="4" height="1" fill="#c4c4c4"/>
<rect x="391" y="307" width="4" height="1" fill="#c4c4c4"/>
<rect x="443" y="307" width="4" height="1" fill="#c4c4c4"/>
<rect x="391" y="316" width="4" height="1" fill="#c4c4c4"/>
<rect x="443" y="316" width="4" height="1" fill="#c4c4c4"/>
<rect x="391" y="325" width="4" height="1" fill="#c4c4c4"/>
<rect x="443" y="325" width="4" height="1" fill="#c4c4c4"/>
<rect x="391" y="334" width="4" height="1" fill="#c4c4c4"/>
<rect x="443" y="334" width="4" height="1" fill="#c4c4c4"/>
<rect x="391" y="343" width="4" height="1" fill="#c4c4c4"/>
<rect x="443" y="343" width="4" height="1" fill="#c4c4c4"/>
<rect x="391" y="352" width="4" height="1" fill="#c4c4c4"/>
<rect x="443" y="352" width="4" height="1" fill="#c4c4c4"/>
<rect x="391" y="361" width="4" height="1" fill="#c4c4c4"/>
<rect x="443" y="361" width="4" height="1" fill="#c4c4c4"/>
<rect x="391" y="370" width="4" height="1" fill="#c4c4c4"/>
<rect x="443" y="370" width="4" height="1" fill="#c4c4c4"/>
<rect x="391" y="379" width="4" height="1" fill="#c4c4c4"/>
<rect x="443" y="379" width="4" height="1" fill="#c4c4c4"/>
<rect x="391" y="388" width="4" height="1" fill="#c4c4c4"/>
<rect x="443" y="388" width="4" height="1" fill="#c4c4c4"/>
<rect x="391" y="397" width="4" height="1" fill="#c4c4c4"/>
<rect x="443" y="397" width="4" height="1" fill="#c4c4c4"/>
<rect x="391" y="406" width="4" height="1" fill="#c4c4c4"/>
<rect x="443" y="406" width="4" height="1" fill="#c4c4c4"/>
<rect x="391" y="415" width="4" height="1" fill="#c4c4c4"/>
<rect x="443" y="415" width="4" height="1" fill="#c4c4c4"/>
<rect x="397" y="234" width="3" height="181" fill="#b9b9b9"/>
<rect x="438" y="234" width="3" height="181" fill="#b9b9b9"/>
<path d="M398.5 413.3L400 415L398.5 416.7L397 415Z" fill="#008080"/>
<path d="M439.5 413.3L441 415L439.5 416.7L438 415Z" fill="#d00000"/>
<text transform="translate(431,239.0) scale(0.84,1)" text-anchor="end" font-family="'Liberation Sans', sans-serif" font-size="12.5" font-weight="normal" fill="#000"  stroke="#000" stroke-width=".28">2.00</text>
<text transform="translate(431,255.3) scale(0.84,1)" text-anchor="end" font-family="'Liberation Sans', sans-serif" font-size="12.5" font-weight="normal" fill="#000"  stroke="#000" stroke-width=".28">1.50</text>
<text transform="translate(431,280.1) scale(0.84,1)" text-anchor="end" font-family="'Liberation Sans', sans-serif" font-size="12.5" font-weight="normal" fill="#000"  stroke="#000" stroke-width=".28">1.00</text>
<text transform="translate(431,299.1) scale(0.84,1)" text-anchor="end" font-family="'Liberation Sans', sans-serif" font-size="12.5" font-weight="normal" fill="#000"  stroke="#000" stroke-width=".28">0.75</text>
<text transform="translate(431,320.1) scale(0.84,1)" text-anchor="end" font-family="'Liberation Sans', sans-serif" font-size="12.5" font-weight="normal" fill="#000"  stroke="#000" stroke-width=".28">0.50</text>
<text transform="translate(431,337.1) scale(0.84,1)" text-anchor="end" font-family="'Liberation Sans', sans-serif" font-size="12.5" font-weight="normal" fill="#000"  stroke="#000" stroke-width=".28">0.40</text>
<text transform="translate(431,354.1) scale(0.84,1)" text-anchor="end" font-family="'Liberation Sans', sans-serif" font-size="12.5" font-weight="normal" fill="#000"  stroke="#000" stroke-width=".28">0.30</text>
<text transform="translate(431,378.7) scale(0.84,1)" text-anchor="end" font-family="'Liberation Sans', sans-serif" font-size="12.5" font-weight="normal" fill="#000"  stroke="#000" stroke-width=".28">0.20</text>
<text transform="translate(431,395.3) scale(0.84,1)" text-anchor="end" font-family="'Liberation Sans', sans-serif" font-size="12.5" font-weight="normal" fill="#000"  stroke="#000" stroke-width=".28">0.15</text>
<text transform="translate(431,419.1) scale(0.84,1)" text-anchor="end" font-family="'Liberation Sans', sans-serif" font-size="12.5" font-weight="normal" fill="#000"  stroke="#000" stroke-width=".28">0.10</text>
<path d="M372.5 271.5H384.5L388.5 276L384.5 280.5H372.5a1.5 1.5 0 0 1 -1.5 -1.5V273a1.5 1.5 0 0 1 1.5 -1.5Z" fill="url(#gthumb)" stroke="#9a9a9a"/>
<path d="M465.5 271.5H453.5L449.5 276L453.5 280.5H465.5a1.5 1.5 0 0 0 1.5 -1.5V273a1.5 1.5 0 0 0 -1.5 -1.5Z" fill="url(#gthumb)" stroke="#9a9a9a"/>
<rect x="478.5" y="237.5" width="41" height="36" rx="3" ry="3" fill="url(#gbtn)" stroke="#707070"/>
<rect x="479.5" y="238.5" width="39" height="34" rx="2" ry="2" fill="none" stroke="#fcfcfc" stroke-opacity=".9"/>
<text transform="translate(499.0,259.7) scale(0.84,1)" text-anchor="middle" font-family="'Liberation Sans', sans-serif" font-size="12.5" font-weight="normal" fill="#000"  stroke="#000" stroke-width=".28">on cw</text>
<rect x="478.5" y="301.5" width="41" height="36" rx="3" ry="3" fill="url(#gbtn)" stroke="#707070"/>
<rect x="479.5" y="302.5" width="39" height="34" rx="2" ry="2" fill="none" stroke="#fcfcfc" stroke-opacity=".9"/>
<text transform="translate(499.0,323.7) scale(0.84,1)" text-anchor="middle" font-family="'Liberation Sans', sans-serif" font-size="12.5" font-weight="normal" fill="#000"  stroke="#000" stroke-width=".28">on ccw</text>
<rect x="478.5" y="362.5" width="41" height="36" rx="3" ry="3" fill="url(#gbtn)" stroke="#707070"/>
<rect x="479.5" y="363.5" width="39" height="34" rx="2" ry="2" fill="none" stroke="#fcfcfc" stroke-opacity=".9"/>
<text transform="translate(499.0,384.7) scale(0.84,1)" text-anchor="middle" font-family="'Liberation Sans', sans-serif" font-size="12.5" font-weight="normal" fill="#000"  stroke="#000" stroke-width=".28">off</text>
</g>
<g id="password">
<text transform="translate(377.5,480.3) scale(0.892,1)" text-anchor="start" font-family="'Liberation Serif', serif" font-size="16" font-weight="normal" fill="#000" >Enter The 4 Digit Password</text>
<rect x="357.5" y="498.5" width="198.5" height="34.5" fill="#fff" stroke="#e3e9ef"/>
<path d="M357.5 498.5H556" stroke="#abadb3" fill="none"/>
<rect x="343.5" y="552.5" width="105" height="17" rx="3" ry="3" fill="url(#gbtn)" stroke="#707070"/>
<rect x="344.5" y="553.5" width="103" height="15" rx="2" ry="2" fill="none" stroke="#fcfcfc" stroke-opacity=".9"/>
<text transform="translate(396.0,565.2) scale(0.84,1)" text-anchor="middle" font-family="'Liberation Sans', sans-serif" font-size="12.5" font-weight="normal" fill="#000"  stroke="#000" stroke-width=".28">LOCK</text>
<rect x="461.5" y="551.5" width="105" height="17" rx="3" ry="3" fill="url(#gbtn)" stroke="#707070"/>
<rect x="462.5" y="552.5" width="103" height="15" rx="2" ry="2" fill="none" stroke="#fcfcfc" stroke-opacity=".9"/>
<text transform="translate(514.0,564.2) scale(0.84,1)" text-anchor="middle" font-family="'Liberation Sans', sans-serif" font-size="12.5" font-weight="normal" fill="#000"  stroke="#000" stroke-width=".28">UNLOCK</text>
</g>
<g id="editor">
<rect x="689" y="56" width="585" height="569" fill="#ffffff"/>
<path d="M677.9 57.8L685.2 64.45L677.9 71.1Z" fill="#008080"/>
<text transform="translate(690.0,67.7) scale(1,.86)" font-family="'Liberation Mono', monospace" font-size="13.33" fill="#000000" stroke="#000000" stroke-width="0.36" textLength="56.0" lengthAdjust="spacing">G90 G21</text>
<text transform="translate(690.0,83.7) scale(1,.86)" font-family="'Liberation Mono', monospace" font-size="13.33" fill="#000000" stroke="#000000" stroke-width="0.36" textLength="32.0" lengthAdjust="spacing">G04 </text>
<text transform="translate(722.0,83.7) scale(1,.86)" font-family="'Liberation Mono', monospace" font-size="13.33" fill="#008080" stroke="#008080" stroke-width="0.1" textLength="32.0" lengthAdjust="spacing">P1.0</text>
<text transform="translate(690.0,99.7) scale(1,.86)" font-family="'Liberation Mono', monospace" font-size="13.33" fill="#000000" stroke="#000000" stroke-width="0.36" textLength="32.0" lengthAdjust="spacing">G00 </text>
<text transform="translate(722.0,99.7) scale(1,.86)" font-family="'Liberation Mono', monospace" font-size="13.33" fill="#008080" stroke="#008080" stroke-width="0.1" textLength="8.0" lengthAdjust="spacing">X</text>
<text transform="translate(730.0,99.7) scale(1,.86)" font-family="'Liberation Mono', monospace" font-size="13.33" fill="#000080" stroke="#000080" stroke-width="0.36" textLength="32.0" lengthAdjust="spacing">#101</text>
<text transform="translate(762.0,99.7) scale(1,.86)" font-family="'Liberation Mono', monospace" font-size="13.33" fill="#008080" stroke="#008080" stroke-width="0.1" textLength="16.0" lengthAdjust="spacing"> Y</text>
<text transform="translate(778.0,99.7) scale(1,.86)" font-family="'Liberation Mono', monospace" font-size="13.33" fill="#000080" stroke="#000080" stroke-width="0.36" textLength="32.0" lengthAdjust="spacing">#102</text>
<text transform="translate(810.0,99.7) scale(1,.86)" font-family="'Liberation Mono', monospace" font-size="13.33" fill="#008080" stroke="#008080" stroke-width="0.1" textLength="64.0" lengthAdjust="spacing"> z0 F100</text>
<text transform="translate(690.0,115.7) scale(1,.86)" font-family="'Liberation Mono', monospace" font-size="13.33" fill="#000000" stroke="#000000" stroke-width="0.36" textLength="32.0" lengthAdjust="spacing">g04 </text>
<text transform="translate(722.0,115.7) scale(1,.86)" font-family="'Liberation Mono', monospace" font-size="13.33" fill="#008080" stroke="#008080" stroke-width="0.1" textLength="32.0" lengthAdjust="spacing">p1.0</text>
<text transform="translate(690.0,131.7) scale(1,.86)" font-family="'Liberation Mono', monospace" font-size="13.33" fill="#000000" stroke="#000000" stroke-width="0.36" textLength="32.0" lengthAdjust="spacing">G00 </text>
<text transform="translate(722.0,131.7) scale(1,.86)" font-family="'Liberation Mono', monospace" font-size="13.33" fill="#008080" stroke="#008080" stroke-width="0.1" textLength="8.0" lengthAdjust="spacing">X</text>
<text transform="translate(730.0,131.7) scale(1,.86)" font-family="'Liberation Mono', monospace" font-size="13.33" fill="#000080" stroke="#000080" stroke-width="0.36" textLength="32.0" lengthAdjust="spacing">#101</text>
<text transform="translate(762.0,131.7) scale(1,.86)" font-family="'Liberation Mono', monospace" font-size="13.33" fill="#008080" stroke="#008080" stroke-width="0.1" textLength="16.0" lengthAdjust="spacing"> Y</text>
<text transform="translate(778.0,131.7) scale(1,.86)" font-family="'Liberation Mono', monospace" font-size="13.33" fill="#000080" stroke="#000080" stroke-width="0.36" textLength="32.0" lengthAdjust="spacing">#102</text>
<text transform="translate(810.0,131.7) scale(1,.86)" font-family="'Liberation Mono', monospace" font-size="13.33" fill="#008080" stroke="#008080" stroke-width="0.1" textLength="16.0" lengthAdjust="spacing"> Z</text>
<text transform="translate(826.0,131.7) scale(1,.86)" font-family="'Liberation Mono', monospace" font-size="13.33" fill="#000080" stroke="#000080" stroke-width="0.36" textLength="32.0" lengthAdjust="spacing">#103</text>
<text transform="translate(858.0,131.7) scale(1,.86)" font-family="'Liberation Mono', monospace" font-size="13.33" fill="#008080" stroke="#008080" stroke-width="0.1" textLength="40.0" lengthAdjust="spacing"> F100</text>
<text transform="translate(690.0,147.7) scale(1,.86)" font-family="'Liberation Mono', monospace" font-size="13.33" fill="#000000" stroke="#000000" stroke-width="0.36" textLength="32.0" lengthAdjust="spacing">g04 </text>
<text transform="translate(722.0,147.7) scale(1,.86)" font-family="'Liberation Mono', monospace" font-size="13.33" fill="#008080" stroke="#008080" stroke-width="0.1" textLength="32.0" lengthAdjust="spacing">p1.0</text>
<text transform="translate(690.0,163.7) scale(1,.86)" font-family="'Liberation Mono', monospace" font-size="13.33" fill="#000000" stroke="#000000" stroke-width="0.36" textLength="32.0" lengthAdjust="spacing">G00 </text>
<text transform="translate(722.0,163.7) scale(1,.86)" font-family="'Liberation Mono', monospace" font-size="13.33" fill="#008080" stroke="#008080" stroke-width="0.1" textLength="8.0" lengthAdjust="spacing">X</text>
<text transform="translate(730.0,163.7) scale(1,.86)" font-family="'Liberation Mono', monospace" font-size="13.33" fill="#000080" stroke="#000080" stroke-width="0.36" textLength="32.0" lengthAdjust="spacing">#101</text>
<text transform="translate(762.0,163.7) scale(1,.86)" font-family="'Liberation Mono', monospace" font-size="13.33" fill="#008080" stroke="#008080" stroke-width="0.1" textLength="16.0" lengthAdjust="spacing"> Y</text>
<text transform="translate(778.0,163.7) scale(1,.86)" font-family="'Liberation Mono', monospace" font-size="13.33" fill="#000080" stroke="#000080" stroke-width="0.36" textLength="32.0" lengthAdjust="spacing">#102</text>
<text transform="translate(810.0,163.7) scale(1,.86)" font-family="'Liberation Mono', monospace" font-size="13.33" fill="#008080" stroke="#008080" stroke-width="0.1" textLength="64.0" lengthAdjust="spacing"> z0 F100</text>
<text transform="translate(690.0,179.7) scale(1,.86)" font-family="'Liberation Mono', monospace" font-size="13.33" fill="#000000" stroke="#000000" stroke-width="0.36" textLength="32.0" lengthAdjust="spacing">g04 </text>
<text transform="translate(722.0,179.7) scale(1,.86)" font-family="'Liberation Mono', monospace" font-size="13.33" fill="#008080" stroke="#008080" stroke-width="0.1" textLength="32.0" lengthAdjust="spacing">p1.0</text>
<text transform="translate(690.0,195.7) scale(1,.86)" font-family="'Liberation Mono', monospace" font-size="13.33" fill="#000000" stroke="#000000" stroke-width="0.36" textLength="32.0" lengthAdjust="spacing">G00 </text>
<text transform="translate(722.0,195.7) scale(1,.86)" font-family="'Liberation Mono', monospace" font-size="13.33" fill="#008080" stroke="#008080" stroke-width="0.1" textLength="104.0" lengthAdjust="spacing">X0 Y0 z0 F100</text>
<text transform="translate(690.0,211.7) scale(1,.86)" font-family="'Liberation Mono', monospace" font-size="13.33" fill="#000000" stroke="#000000" stroke-width="0.36" textLength="24.0" lengthAdjust="spacing">M2 </text>
<text transform="translate(714.0,211.7) scale(1,.86)" font-family="'Liberation Mono', monospace" font-size="13.33" fill="#008000" stroke="#008000" stroke-width="0.1" textLength="48.0" lengthAdjust="spacing">(stop)</text>
</g>
<g id="toolbar">
<rect x="769" y="28" width="50" height="33" fill="#f0f0f0"/>
<path d="M769 60.5H818.5V28" fill="none" stroke="#696969"/>
<path d="M770 59.5H817.5V29" fill="none" stroke="#a0a0a0"/>
<path d="M769.5 60V28.5H818" fill="none" stroke="#ffffff"/>
<rect x="823" y="28" width="50" height="33" fill="#f0f0f0"/>
<path d="M823 60.5H872.5V28" fill="none" stroke="#696969"/>
<path d="M824 59.5H871.5V29" fill="none" stroke="#a0a0a0"/>
<path d="M823.5 60V28.5H872" fill="none" stroke="#ffffff"/>
<rect x="874" y="28" width="50" height="33" fill="#f0f0f0"/>
<path d="M874 60.5H923.5V28" fill="none" stroke="#696969"/>
<path d="M875 59.5H922.5V29" fill="none" stroke="#a0a0a0"/>
<path d="M874.5 60V28.5H923" fill="none" stroke="#ffffff"/>
<rect x="928" y="28" width="50" height="33" fill="#f0f0f0"/>
<path d="M928 60.5H977.5V28" fill="none" stroke="#696969"/>
<path d="M929 59.5H976.5V29" fill="none" stroke="#a0a0a0"/>
<path d="M928.5 60V28.5H977" fill="none" stroke="#ffffff"/>
<rect x="979" y="28" width="50" height="33" fill="#f0f0f0"/>
<path d="M979 60.5H1028.5V28" fill="none" stroke="#696969"/>
<path d="M980 59.5H1027.5V29" fill="none" stroke="#a0a0a0"/>
<path d="M979.5 60V28.5H1028" fill="none" stroke="#ffffff"/>
<rect x="1033" y="28" width="50" height="33" fill="#f0f0f0"/>
<path d="M1033 60.5H1082.5V28" fill="none" stroke="#696969"/>
<path d="M1034 59.5H1081.5V29" fill="none" stroke="#a0a0a0"/>
<path d="M1033.5 60V28.5H1082" fill="none" stroke="#ffffff"/>
<rect x="1084" y="28" width="50" height="33" fill="#f0f0f0"/>
<path d="M1084 60.5H1133.5V28" fill="none" stroke="#696969"/>
<path d="M1085 59.5H1132.5V29" fill="none" stroke="#a0a0a0"/>
<path d="M1084.5 60V28.5H1133" fill="none" stroke="#ffffff"/>
<rect x="1138" y="28" width="50" height="33" fill="#f0f0f0"/>
<path d="M1138 60.5H1187.5V28" fill="none" stroke="#696969"/>
<path d="M1139 59.5H1186.5V29" fill="none" stroke="#a0a0a0"/>
<path d="M1138.5 60V28.5H1187" fill="none" stroke="#ffffff"/>
<path d="M775.5 35.5H782.5L785.5 38.5V47.5H775.5Z" fill="#fff" stroke="#000"/><path d="M782.5 35.5V38.5H785.5" fill="none" stroke="#000"/>
<text transform="translate(789.5,43.2) scale(0.96,1)" text-anchor="start" font-family="'Liberation Sans', sans-serif" font-size="10.5" font-weight="bold" fill="#008080"  stroke="#008080" stroke-width=".35">New</text>
<path d="M828.5 47V38.5H832.5L833.5 40H839.5V41.5" fill="#ffff80" stroke="#000"/>
<path d="M828.5 47L831.5 41.5H843L840 47Z" fill="#808000" stroke="#000" stroke-linejoin="round"/>
<path d="M836 36.5Q838.5 33.5 841.5 36.2M841.8 36.5L842 33.8M841.8 36.5L839.2 36.2" fill="none" stroke="#000"/>
<text transform="translate(844,43.4) scale(0.95,1)" text-anchor="start" font-family="'Liberation Sans', sans-serif" font-size="10.5" font-weight="bold" fill="#008080"  stroke="#008080" stroke-width=".35">Open</text>
<rect x="879.5" y="34.5" width="13" height="13" fill="#808000" stroke="#000"/>
<rect x="882" y="35" width="8" height="6" fill="#c0c0c0"/>
<rect x="882" y="43" width="8" height="4" fill="#000"/>
<rect x="887" y="44" width="2" height="3" fill="#c0c0c0"/>
<rect x="890.5" y="35.5" width="1" height="1" fill="#fff"/>
<text transform="translate(893.6,43.4) scale(0.97,1)" text-anchor="start" font-family="'Liberation Sans', sans-serif" font-size="10.5" font-weight="bold" fill="#008080"  stroke="#008080" stroke-width=".35">Save</text>
<rect x="933.5" y="34.5" width="13" height="13" fill="#808000" stroke="#000"/>
<rect x="936" y="35" width="8" height="6" fill="#c0c0c0"/>
<rect x="936" y="43" width="8" height="4" fill="#000"/>
<rect x="941" y="44" width="2" height="3" fill="#c0c0c0"/>
<rect x="944.5" y="35.5" width="1" height="1" fill="#fff"/>
<text transform="translate(948.6,41.2) scale(0.97,1)" text-anchor="start" font-family="'Liberation Sans', sans-serif" font-size="10.5" font-weight="bold" fill="#008080"  stroke="#008080" stroke-width=".35">Save</text>
<text transform="translate(952,49.7) scale(1.0,1)" text-anchor="start" font-family="'Liberation Sans', sans-serif" font-size="10.5" font-weight="bold" fill="#008080"  stroke="#008080" stroke-width=".35">As</text>
<text transform="translate(1003,42.2) scale(1.0,1)" text-anchor="middle" font-family="'Liberation Sans', sans-serif" font-size="10.5" font-weight="bold" fill="#008080" opacity=".5">Restart</text>
<path d="M999.8 45.6L995.2 49.2L999.8 52.8ZM1006.8 45.6L1002.2 49.2L1006.8 52.8Z" fill="#008080" opacity=".45"/>
<text transform="translate(1037.4,40.1) scale(0.985,1)" text-anchor="start" font-family="'Liberation Sans', sans-serif" font-size="9.9" font-weight="bold" fill="#008080"  stroke="#008080" stroke-width=".35">Single</text>
<text transform="translate(1042.2,47.9) scale(1.0,1)" text-anchor="start" font-family="'Liberation Sans', sans-serif" font-size="9.9" font-weight="bold" fill="#008080"  stroke="#008080" stroke-width=".35">Step</text>
<path d="M1069 53V46.2H1074.8V49" fill="none" stroke="#008080" stroke-width="1.8"/><path d="M1071.3 48.8H1078.6L1074.9 53.2Z" fill="#008080"/>
<text transform="translate(1089.8,42.1) scale(1.0,1)" text-anchor="start" font-family="'Liberation Sans', sans-serif" font-size="10.5" font-weight="bold" fill="#008080"  stroke="#008080" stroke-width=".35">Tool</text>
<text transform="translate(1098.6,52.0) scale(0.98,1)" text-anchor="start" font-family="'Liberation Sans', sans-serif" font-size="10.5" font-weight="bold" fill="#008080"  stroke="#008080" stroke-width=".35">Setup</text>
<text transform="translate(1160.6,42.9) scale(1.0,1)" text-anchor="middle" font-family="'Liberation Sans', sans-serif" font-size="10.5" font-weight="bold" fill="#008080"  stroke="#008080" stroke-width=".35">G</text>
<text transform="translate(1162,52.0) scale(0.98,1)" text-anchor="middle" font-family="'Liberation Sans', sans-serif" font-size="10.5" font-weight="bold" fill="#008080"  stroke="#008080" stroke-width=".35">Viewer</text>
</g>
<g id="hscroll">
<rect x="673" y="625" width="601" height="15.5" fill="#eeeeee"/>
<rect x="673" y="625" width="601" height="1" fill="#e6e6e6"/><rect x="673" y="640" width="601" height="1" fill="#f4f4f4"/>
<path d="M683 629L679 632.5L683 636Z" fill="#303030"/>
<path d="M1264 629L1268 632.5L1264 636Z" fill="#303030"/>
<rect x="691.5" y="625.5" width="162" height="14" rx="2.5" fill="url(#gbtn)" stroke="#8e8e8e"/>
<rect x="692.5" y="626.5" width="160" height="12" rx="1.5" fill="none" stroke="#fafafa" stroke-opacity=".8"/>
<path d="M769.5 629.5V636M771.5 629.5V636M773.5 629.5V636" stroke="#505050" fill="none"/>
</g>
<g id="mdi">
<rect x="731.5" y="666.5" width="488" height="20.5" fill="#fff" stroke="#e2e8ee"/>
<path d="M731.5 666.5H1219.5" fill="none" stroke="#abadb3"/>
<text transform="translate(735.3,682) scale(0.84,1)" text-anchor="start" font-family="'Liberation Sans', sans-serif" font-size="12.5" font-weight="normal" fill="#000"  stroke="#000" stroke-width=".28">M3S1000</text>
<path d="M1207.5 675.5h8l-4 4z" fill="#000"/>
<rect x="1237.5" y="667.5" width="35" height="23" rx="3" ry="3" fill="url(#gbtn)" stroke="#707070"/>
<rect x="1238.5" y="668.5" width="33" height="21" rx="2" ry="2" fill="none" stroke="#fcfcfc" stroke-opacity=".9"/>
<text transform="translate(1255.0,683.2) scale(0.84,1)" text-anchor="middle" font-family="'Liberation Sans', sans-serif" font-size="12.5" font-weight="normal" fill="#000"  stroke="#000" stroke-width=".28">Send</text>
<rect x="736.5" y="703.5" width="105" height="17" rx="3" ry="3" fill="url(#gbtn)" stroke="#707070"/>
<rect x="737.5" y="704.5" width="103" height="15" rx="2" ry="2" fill="none" stroke="#fcfcfc" stroke-opacity=".9"/>
<text transform="translate(789.0,716.2) scale(0.84,1)" text-anchor="middle" font-family="'Liberation Sans', sans-serif" font-size="12.5" font-weight="normal" fill="#000"  stroke="#000" stroke-width=".28">POSITION</text>
<rect x="886.5" y="703.5" width="105" height="17" rx="3" ry="3" fill="url(#gbtn)" stroke="#707070"/>
<rect x="887.5" y="704.5" width="103" height="15" rx="2" ry="2" fill="none" stroke="#fcfcfc" stroke-opacity=".9"/>
<rect x="1037.5" y="703.5" width="105" height="17" rx="3" ry="3" fill="url(#gbtn)" stroke="#707070"/>
<rect x="1038.5" y="704.5" width="103" height="15" rx="2" ry="2" fill="none" stroke="#fcfcfc" stroke-opacity=".9"/>
<rect x="1200.5" y="702.5" width="105" height="17" rx="3" ry="3" fill="url(#gbtn)" stroke="#707070"/>
<rect x="1201.5" y="703.5" width="103" height="15" rx="2" ry="2" fill="none" stroke="#fcfcfc" stroke-opacity=".9"/>
</g>
<g id="highlights">
<polygon points="241,29 266,30 283.5,33 284,49.5 274,49.5 266,48 242,46.5" fill="#ffff00" style="mix-blend-mode:multiply"/>
<polygon points="289.5,29.5 312,29.5 329,31 331,31.5 330.5,47.5 317,47.5 290,46" fill="#ffff00" style="mix-blend-mode:multiply"/>
<polygon points="241.5,63 247,63.5 262,67 283,66 282.5,82 268,83 258,82.5 242.5,80" fill="#ffff00" style="mix-blend-mode:multiply"/>
<polygon points="297,64 318,64 328,67 328,82 316,81 297,79.5" fill="#ffff00" style="mix-blend-mode:multiply"/>
<polygon points="241,97 281,97 281,113.5 242,113.5" fill="#ffff00" style="mix-blend-mode:multiply"/>
<polygon points="290,97.5 327,97.5 327,114 290,112" fill="#ffff00" style="mix-blend-mode:multiply"/>
<polygon points="366.2,64 389,63 415,61 465,61 493.2,63 493.2,79 440,79.8 439,78.6 390,78.6 389.8,80.6 366.2,80.6" fill="#ffff00" style="mix-blend-mode:multiply"/>
<polygon points="349,94.2 498,94.2 498,110 349,110" fill="#ffff00" style="mix-blend-mode:multiply"/>
<polygon points="510,86 528,86 533,87.5 541,88.5 564,91.5 564,107 562.4,108.6 508,109 508,93.3 510,93" fill="#ffff00" style="mix-blend-mode:multiply"/>
<polygon points="594.2,91.9 642,91.9 642,107.4 640.8,109 594.2,108.9" fill="#ffff00" style="mix-blend-mode:multiply"/>
<polygon points="12.5,152 96.5,151.5 96.5,166.5 55,167 13,166.5" fill="#ffff00" style="mix-blend-mode:multiply"/>
<polygon points="9,179.5 47,178.5 52.5,178.5 52.5,194 15,194 15,195 9,195" fill="#ffff00" style="mix-blend-mode:multiply"/>
<polygon points="54,179.5 94,179.5 94,194 54,194" fill="#ffff00" style="mix-blend-mode:multiply"/>
<polygon points="27.5,224 82,224 82,244.5 72,244.5 72,240 27.5,240" fill="#ffff00" style="mix-blend-mode:multiply"/>
<polygon points="43,250.5 92,250.5 92,265.5 43,266" fill="#ffff00" style="mix-blend-mode:multiply"/>
<polygon points="10.9,674.9 64.5,674.9 106.8,681.9 106.8,698.9 99.3,698.9 54.6,691.8 10.9,691.8" fill="#ffff00" style="mix-blend-mode:multiply"/>
<polygon points="739.9,703.2 780.6,703.2 837.2,711.9 847,710.7 847,727.8 820.3,727.8 777.6,721 739.9,719.5" fill="#ffff00" style="mix-blend-mode:multiply"/>
</g>
<rect x="0" y="2" width="2" height="724" fill="#e6eaf1"/>
<rect x="2" y="2" width="1" height="723" fill="#3c3c3c"/>
<rect x="1" y="1" width="1" height="1" fill="#3c3c3c"/>
<rect x="0" y="725" width="3" height="1" fill="#3c3c3c"/>
</svg>
</body></html>
